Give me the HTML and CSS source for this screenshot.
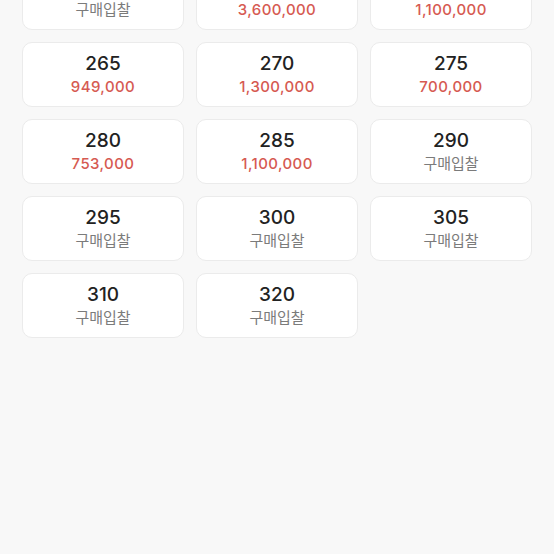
FILE: index.html
```html
<!DOCTYPE html>
<html lang="ko">
<head>
<meta charset="UTF-8">
<meta name="viewport" content="width=device-width, initial-scale=1.0">
<title>사이즈 선택</title>
<link rel="stylesheet" href="styles.css">
</head>
<body>
  <div class="size-grid">
    <div class="size-card"><span class="size">260</span><span class="price bid">구매입찰</span></div>
    <div class="size-card"><span class="size">255</span><span class="price">3,600,000</span></div>
    <div class="size-card"><span class="size">260</span><span class="price">1,100,000</span></div>

    <div class="size-card"><span class="size">265</span><span class="price">949,000</span></div>
    <div class="size-card"><span class="size">270</span><span class="price">1,300,000</span></div>
    <div class="size-card"><span class="size">275</span><span class="price">700,000</span></div>

    <div class="size-card"><span class="size">280</span><span class="price">753,000</span></div>
    <div class="size-card"><span class="size">285</span><span class="price">1,100,000</span></div>
    <div class="size-card"><span class="size">290</span><span class="price bid">구매입찰</span></div>

    <div class="size-card"><span class="size">295</span><span class="price bid">구매입찰</span></div>
    <div class="size-card"><span class="size">300</span><span class="price bid">구매입찰</span></div>
    <div class="size-card"><span class="size">305</span><span class="price bid">구매입찰</span></div>

    <div class="size-card"><span class="size">310</span><span class="price bid">구매입찰</span></div>
    <div class="size-card"><span class="size">320</span><span class="price bid">구매입찰</span></div>
  </div>
</body>
</html>
```

FILE: styles.css
```css
* {
  box-sizing: border-box;
  margin: 0;
  padding: 0;
}

body {
  background-color: #f8f8f8;
  font-family: Inter, "Noto Sans CJK KR", sans-serif;
  height: 554px;
  overflow: hidden;
}

.size-grid {
  display: grid;
  grid-template-columns: repeat(3, 162px);
  column-gap: 12px;
  row-gap: 12px;
  padding: 0 22px;
  margin-top: -35px;
}

.size-card {
  height: 65px;
  background-color: #fff;
  border: 1px solid #ebebeb;
  border-radius: 10px;
  display: flex;
  flex-direction: column;
  align-items: center;
  justify-content: center;
  gap: 2px;
}

.size {
  font-size: 19px;
  font-weight: 500;
  color: #222;
  line-height: 22px;
}

.price {
  font-size: 15px;
  font-weight: 500;
  color: #d65a52;
  line-height: 19px;
  letter-spacing: 0.4px;
}

.price.bid {
  color: #7b7b7b;
  font-weight: 400;
  letter-spacing: 0;
}
```
